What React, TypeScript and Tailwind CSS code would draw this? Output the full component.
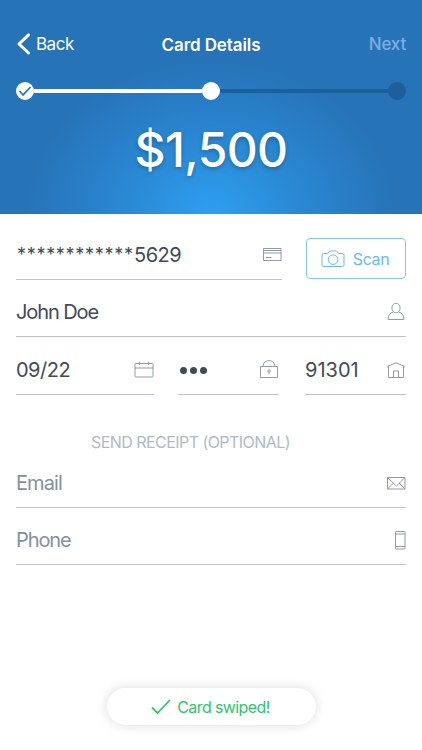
import type { ReactNode } from 'react';

function Icon({ w, h, children }: { w: number; h: number; children: ReactNode }) {
  return (
    <svg
      width={w}
      height={h}
      viewBox={`0 0 ${w} ${h}`}
      fill="none"
      stroke="currentColor"
      strokeWidth="1"
      className="mb-px block shrink-0 text-[#919ca7]"
    >
      {children}
    </svg>
  );
}

const CardIcon = () => (
  <Icon w={20} h={20}>
    <path d="M1.500 4.500h17.500v12H1.500zM1.500 6.500h17.500M1.500 9h17.500M4 13.500h5.500" />
  </Icon>
);

const UserIcon = () => (
  <Icon w={20} h={20}>
    <ellipse cx="10" cy="6" rx="4.100" ry="4.800" />
    <path d="M7.500 10C4 10.800 2 13.600 2 17.500h16c0-3.900-2-6.700-5.500-7.500" />
  </Icon>
);

const CalendarIcon = () => (
  <Icon w={20} h={20}>
    <rect x="1" y="4.500" width="18" height="13.500" rx="1" />
    <path d="M1 9h18M5.500 3v3M14.500 3v3" />
  </Icon>
);

const LockIcon = () => (
  <Icon w={20} h={20}>
    <path d="M1.500 7.500h17v11h-17zM4 7.500C4.300 3.500 6.600 1.700 10 1.700s5.700 1.800 6 5.800" />
    <circle cx="10" cy="12" r="1.200" />
    <path d="M10 13v2.500" />
  </Icon>
);

const HomeIcon = () => (
  <Icon w={20} h={20}>
    <path d="M1.300 8.500V7.400L10 3.800l8.700 3.600v1.100M2.500 7.500v11h15v-11M7.500 18.500V12h5v6.500" />
  </Icon>
);

const MailIcon = () => (
  <Icon w={20} h={20}>
    <path d="M1.500 4.500h17.500v11.500H1.500zM1.500 4.500l8.800 8.500 8.700-8.500M1.500 16l6-6M19 16l-6-6" />
  </Icon>
);

const PhoneIcon = () => (
  <Icon w={12} h={20}>
    <rect x="1.500" y="1.500" width="9.500" height="17.500" rx="0.800" />
    <path d="M1.500 4H11M1.500 16.500H11" />
  </Icon>
);

function Field({ className = '', icon, children }: { className?: string; icon: ReactNode; children: ReactNode }) {
  return (
    <div className={`flex items-center justify-between border-b border-[#bdc2ce] ${className}`}>
      {children}
      {icon}
    </div>
  );
}

function Header() {
  return (
    <header className="h-[214px] bg-[#2673b8] bg-[radial-gradient(ellipse_185px_155px_at_50%_100%,#2e9ff0_0%,#2a87d2_50%,#2673b8_100%)] px-4 pt-[29px] text-white">
      <nav className="grid h-7 grid-cols-3 items-center text-[17px] leading-7">
        <div className="flex items-center">
          <svg width="16" height="24" viewBox="0 0 16 24" fill="none" stroke="currentColor" strokeWidth="3" strokeLinecap="round" strokeLinejoin="round">
            <path d="M12.500 2.800 3 12l9.500 9" />
          </svg>
          <span className="ml-1 tracking-[-0.500px]">Back</span>
        </div>
        <h1 className="pt-0.5 text-center font-semibold tracking-[-0.100px] whitespace-nowrap">Card Details</h1>
        <span className="text-right font-medium tracking-[-0.200px] text-[#7eaede]">Next</span>
      </nav>
      <div className="mt-[25px] flex h-[18px] items-center">
        <div className="flex size-[18px] shrink-0 items-center justify-center rounded-full bg-white">
          <svg width="14" height="12" viewBox="0 0 14 12" fill="none" stroke="#2673b8" strokeWidth="1.700">
            <path d="m1.500 6 3.500 4 7.500-8" />
          </svg>
        </div>
        <div className="h-1 flex-1 bg-white" />
        <div className="size-[18px] shrink-0 rounded-full bg-white" />
        <div className="h-1 flex-1 bg-[#1d5f9a]" />
        <div className="size-[18px] shrink-0 rounded-full bg-[#1d5f9a]" />
      </div>
      <p className="mt-5 text-center text-[48px] leading-[60px] font-medium tracking-[-0.600px] [text-shadow:0_2px_4px_rgb(0_0_0/0.25)]">$1,500</p>
    </header>
  );
}

export default function App() {
  return (
    <div className="flex h-[750px] w-[422px] flex-col bg-white font-['Inter',sans-serif] text-[#414b56]">
      <Header />
      <main className="flex flex-1 flex-col px-4 pt-6 text-[20px] leading-6 tracking-[-0.500px]">
        <div className="flex h-[42px] justify-between">
          <Field className="w-[266px] pb-2" icon={<CardIcon />}>
            <span className="flex pl-px">
              <span className="w-[117px] text-[18px] tracking-[0.700px]">************</span>
              <span>5629</span>
            </span>
          </Field>
          <button className="flex h-[41px] w-[100px] items-center justify-center gap-2 rounded-[4px] border border-[#88c5f1] pr-0.5 text-[16px] tracking-[-0.400px] text-[#6eb9ef]">
            <svg width="24" height="20" viewBox="0 0 24 20" fill="none" stroke="currentColor" strokeWidth="1">
              <path d="M2.500 4.500h4L8.500 2h7l2 2.500h4q1.500 0 1.500 1.500v10q0 1.500-1.500 1.500h-19Q1 17.500 1 16V6q0-1.500 1.500-1.500Z" />
              <circle cx="12" cy="10.700" r="4.800" />
            </svg>
            Scan
          </button>
        </div>
        <Field className="h-[57px] pt-2" icon={<UserIcon />}>
          <span className="tracking-[-1.100px]">John Doe</span>
        </Field>
        <div className="flex h-[58px]">
          <Field className="w-[138px] pt-2" icon={<CalendarIcon />}>
            <span>09/22</span>
          </Field>
          <Field className="ml-6 w-[101px] pt-2" icon={<LockIcon />}>
            <span className="flex gap-[3px] pt-0.5 pl-0.5">
              <i className="size-[7px] rounded-full bg-[#414b56]" />
              <i className="size-[7px] rounded-full bg-[#414b56]" />
              <i className="size-[7px] rounded-full bg-[#414b56]" />
            </span>
          </Field>
          <Field className="ml-auto w-[101px] pt-2" icon={<HomeIcon />}>
            <span className="tracking-[0px]">91301</span>
          </Field>
        </div>
        <h2 className="mt-[35px] ml-[75px] h-[25px] text-[16px] tracking-[-0.550px] whitespace-nowrap text-[#b0bac4]">SEND RECEIPT (OPTIONAL)</h2>
        <Field className="h-[53px] pt-1 text-[#84919d]" icon={<MailIcon />}>
          <span className="tracking-[-0.900px]">Email</span>
        </Field>
        <Field className="h-[57px] pt-2 text-[#84919d]" icon={<PhoneIcon />}>
          <span className="tracking-[-1.100px]">Phone</span>
        </Field>
        <div className="mx-auto mt-auto mb-[25px] flex h-[37px] w-[209px] items-center justify-center gap-1.5 rounded-full bg-white pr-px text-[16px] tracking-[-0.600px] text-[#31c46f] shadow-[0_0_12px_rgb(0_0_0/0.140)]">
          <svg width="20" height="16" viewBox="0 0 20 16" fill="none" stroke="currentColor" strokeWidth="1.800">
            <path d="m1 8.500 5.500 5.500L19 1" />
          </svg>
          Card swiped!
        </div>
      </main>
    </div>
  );
}
